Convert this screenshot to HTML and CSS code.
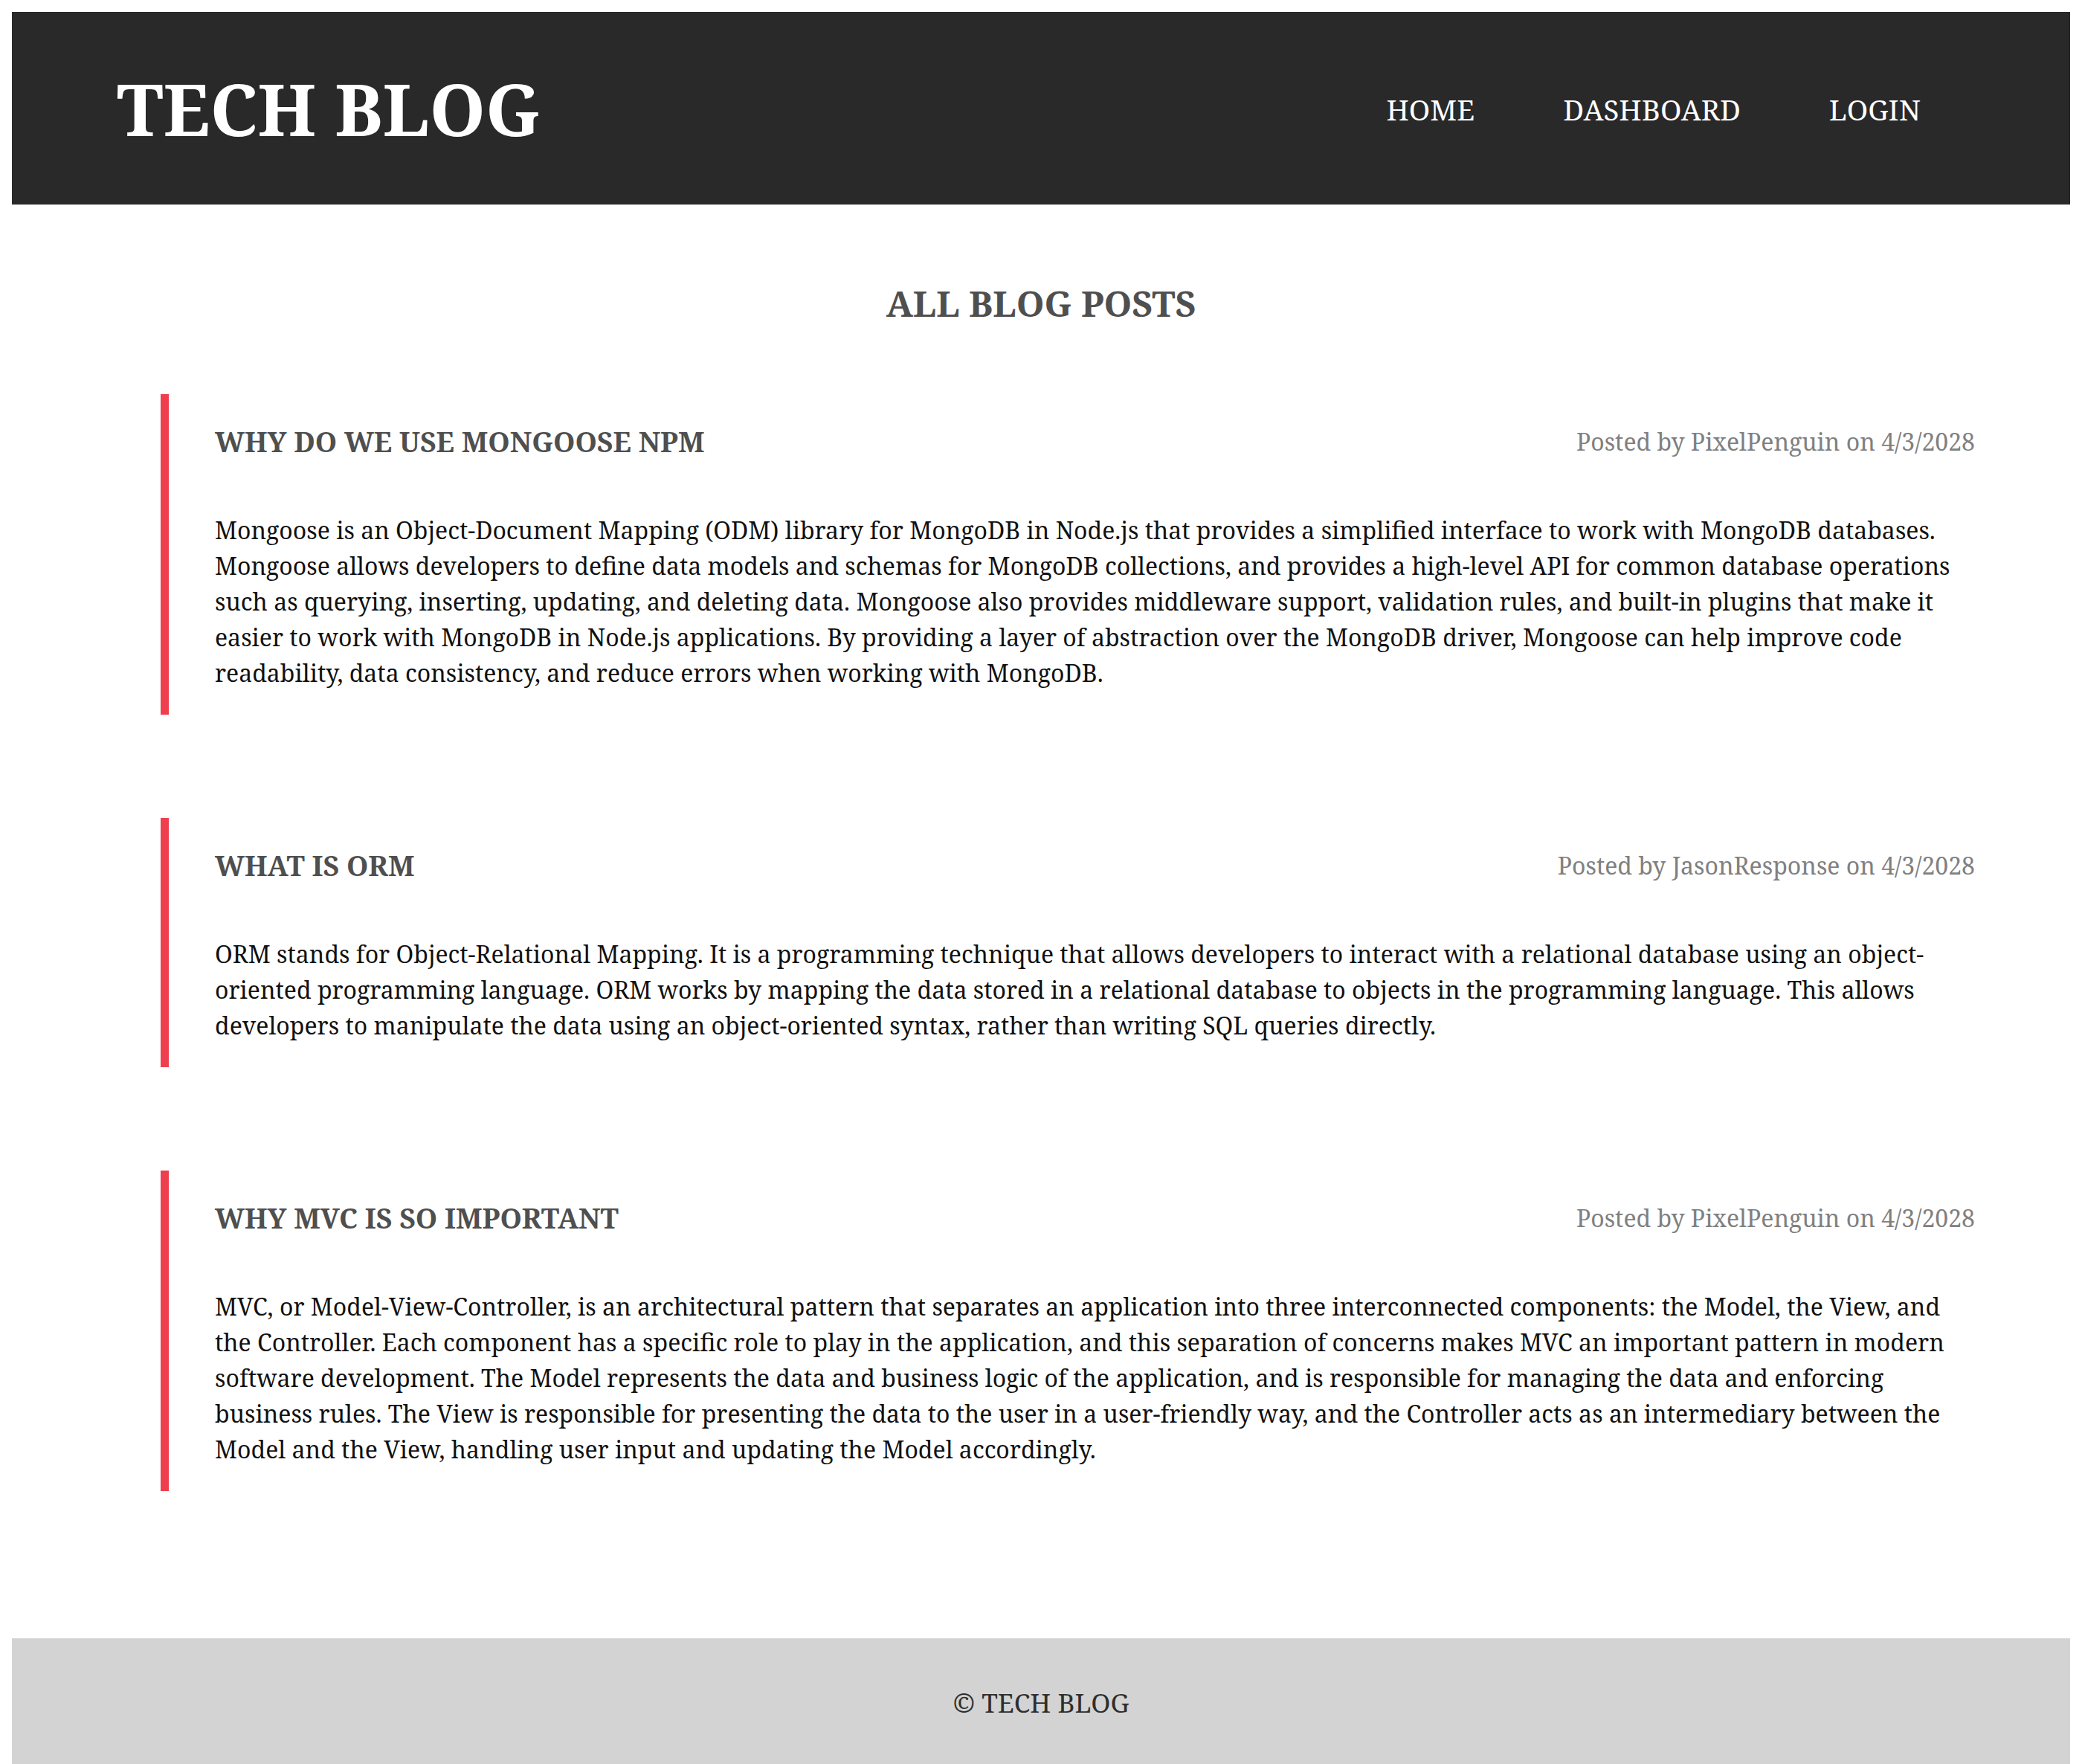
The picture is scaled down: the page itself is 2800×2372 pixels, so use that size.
FILE: index.html
```html
<!DOCTYPE html>
<html lang="en">
<head>
<meta charset="utf-8">
<title>Tech Blog</title>
<link rel="stylesheet" href="styles.css">
</head>
<body>
<header class="site-header">
  <h1 class="brand">TECH BLOG</h1>
  <nav class="nav">
    <a class="nav-link" href="#">HOME</a>
    <a class="nav-link" href="#">DASHBOARD</a>
    <a class="nav-link" href="#">LOGIN</a>
  </nav>
</header>
<main class="main">
  <h2 class="page-title">ALL BLOG POSTS</h2>
  <div class="posts">
    <article class="post">
      <div class="post-head">
        <h3 class="post-title">WHY DO WE USE MONGOOSE NPM</h3>
        <p class="post-meta">Posted by PixelPenguin on 4/3/2028</p>
      </div>
      <p class="post-body">Mongoose is an Object-Document Mapping (ODM) library for MongoDB in Node.js that provides a simplified interface to work with MongoDB databases. Mongoose allows developers to define data models and schemas for MongoDB collections, and provides a high-level API for common database operations such as querying, inserting, updating, and deleting data. Mongoose also provides middleware support, validation rules, and built-in plugins that make it easier to work with MongoDB in Node.js applications. By providing a layer of abstraction over the MongoDB driver, Mongoose can help improve code readability, data consistency, and reduce errors when working with MongoDB.</p>
    </article>
    <article class="post">
      <div class="post-head">
        <h3 class="post-title">WHAT IS ORM</h3>
        <p class="post-meta">Posted by JasonResponse on 4/3/2028</p>
      </div>
      <p class="post-body">ORM stands for Object-Relational Mapping. It is a programming technique that allows developers to interact with a relational database using an object-oriented programming language. ORM works by mapping the data stored in a relational database to objects in the programming language. This allows developers to manipulate the data using an object-oriented syntax, rather than writing SQL queries directly.</p>
    </article>
    <article class="post">
      <div class="post-head">
        <h3 class="post-title">WHY MVC IS SO IMPORTANT</h3>
        <p class="post-meta">Posted by PixelPenguin on 4/3/2028</p>
      </div>
      <p class="post-body">MVC, or Model-View-Controller, is an architectural pattern that separates an application into three interconnected components: the Model, the View, and the Controller. Each component has a specific role to play in the application, and this separation of concerns makes MVC an important pattern in modern software development. The Model represents the data and business logic of the application, and is responsible for managing the data and enforcing business rules. The View is responsible for presenting the data to the user in a user-friendly way, and the Controller acts as an intermediary between the Model and the View, handling user input and updating the Model accordingly.</p>
    </article>
  </div>
</main>
<footer class="site-footer">
  <p class="footer-text">© TECH BLOG</p>
</footer>
</body>
</html>
```
FILE: styles.css
```css
html, body {
  background: #ffffff;
}
body {
  margin: 16px 16px 0;
  font-family: "Noto Serif", "DejaVu Serif", "Liberation Serif", serif;
  font-size: 32px;
  color: #111111;
}
.site-header {
  background: #292929;
  display: flex;
  align-items: center;
  justify-content: space-between;
  padding: 0 201px 0 141px;
}
.brand {
  margin: 64px 0;
  font-size: 96px;
  font-weight: 700;
  line-height: 131px;
  color: #ffffff;
}
.nav {
  display: flex;
  gap: 119px;
  padding-top: 2px;
}
.nav-link {
  color: #ffffff;
  text-decoration: none;
  font-size: 38.4px;
}
.main {
  padding: 100px 0 198px;
}
.page-title {
  margin: 0 0 90px;
  text-align: center;
  font-size: 48px;
  line-height: 65px;
  color: #4f4f4f;
}
.posts {
  display: flex;
  flex-direction: column;
  gap: 139px;
  padding: 0 128px 0 200px;
}
.post {
  border-left: 11px solid #ef3e4d;
  padding: 40px 0 32px 62px;
}
.post-head {
  display: flex;
  justify-content: space-between;
  align-items: flex-start;
  margin-bottom: 71px;
}
.post-title {
  margin: 0;
  font-size: 37.4px;
  line-height: 47px;
  color: #4f4f4f;
}
.post-meta {
  margin: 0;
  font-size: 32px;
  line-height: 48px;
  color: #808080;
}
.post-body {
  margin: 0;
  line-height: 48px;
}
.site-footer {
  background: #d3d3d3;
  padding: 62px 0 60px;
  text-align: center;
}
.footer-text {
  margin: 0;
  font-size: 35.2px;
  line-height: 48px;
  color: #2e2e2e;
}
```
